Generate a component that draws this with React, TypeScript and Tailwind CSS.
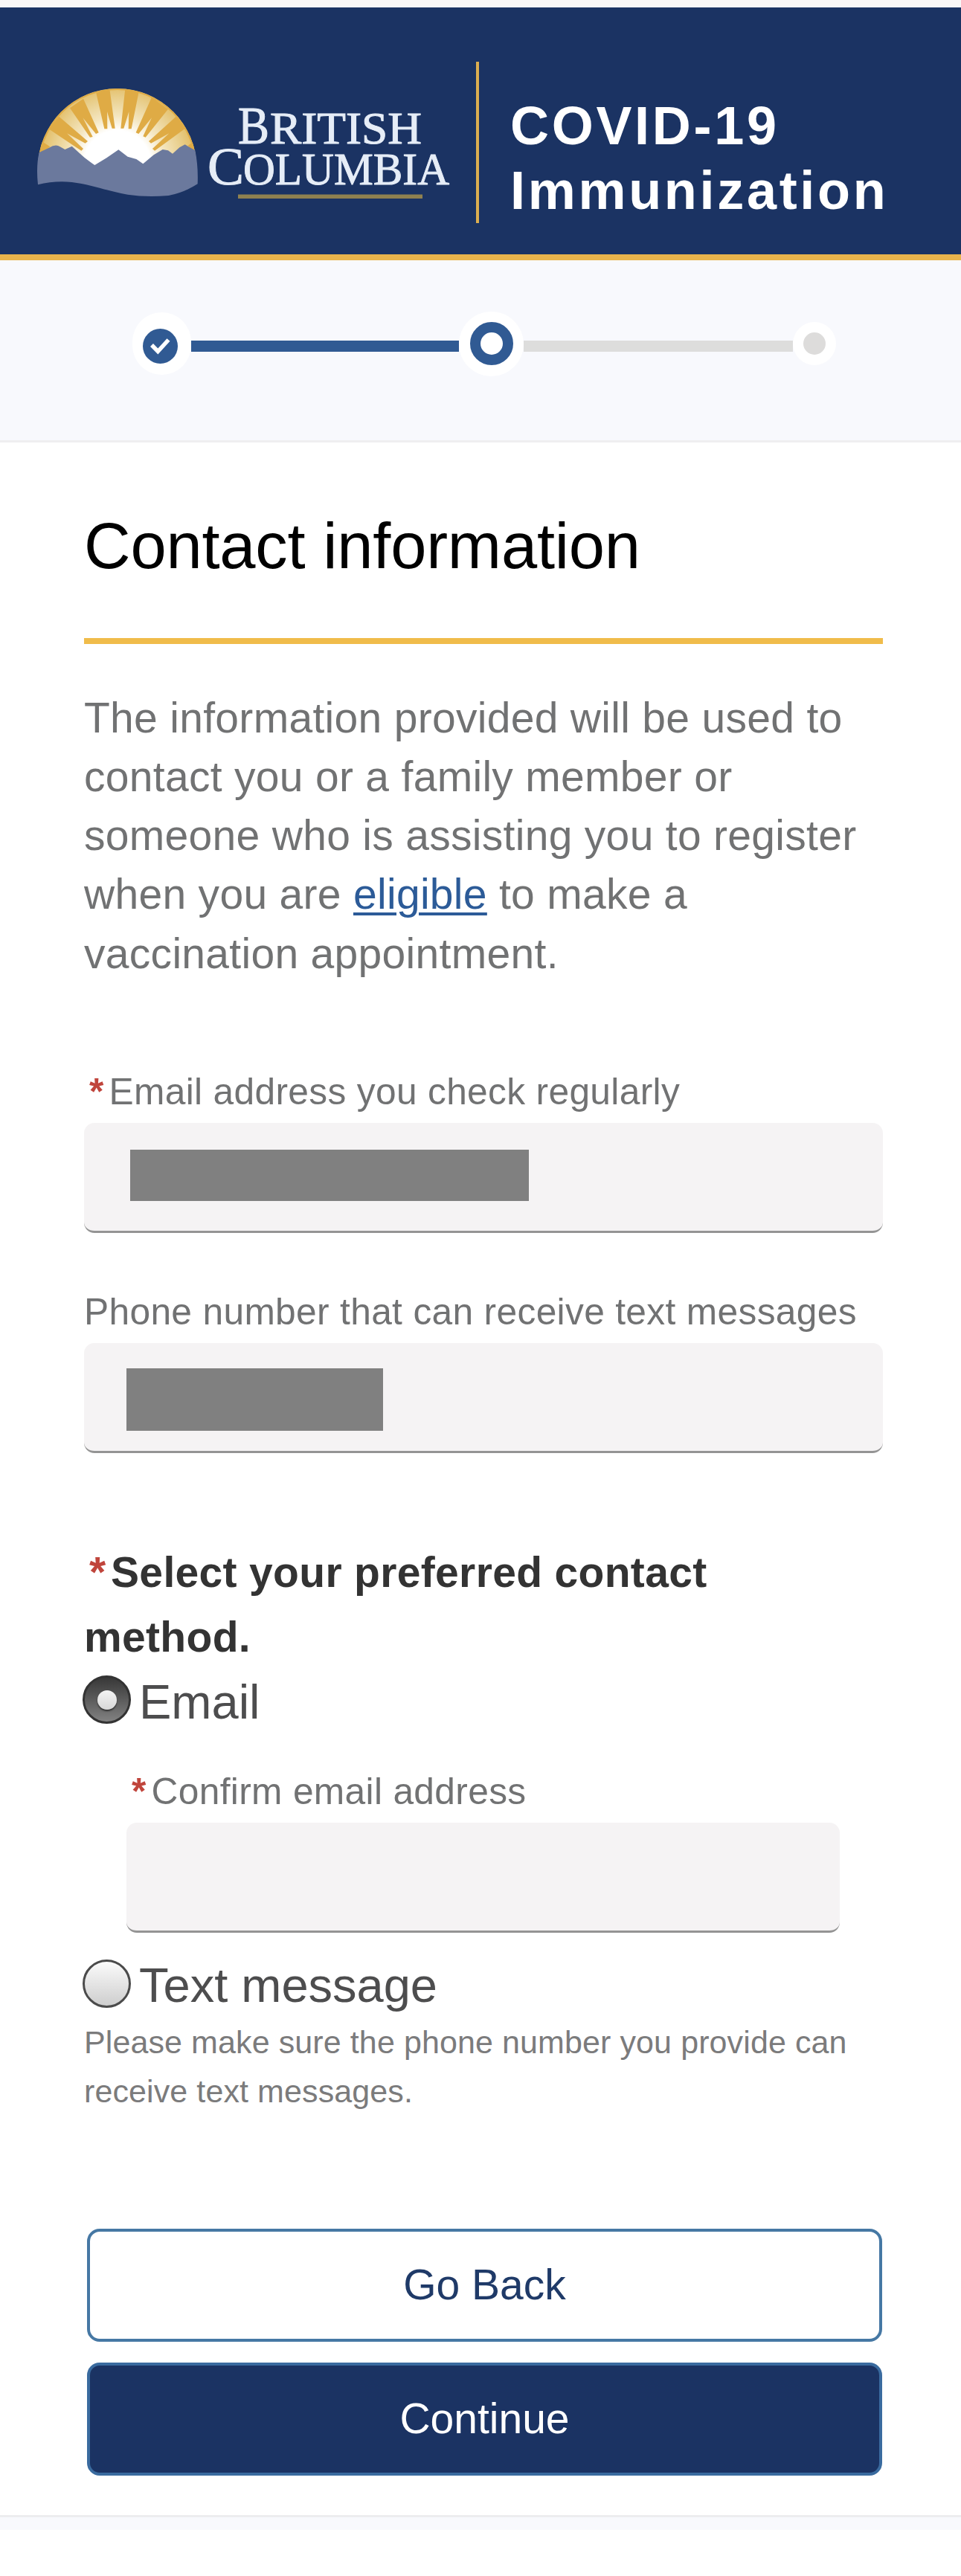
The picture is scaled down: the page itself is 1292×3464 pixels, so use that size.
import type { ReactNode } from "react";

const rays = [
  "415,88 470,100 440,250 428,250 430,180 409,248 397,248",
  "298,106 352,88 374,248 362,248 342,180 343,250 331,250",
  "522,122 588,170 497,284 487,280 522,205 469,270 458,265",
  "192,166 246,128 308,265 297,270 244,205 284,282 273,284",
  "620,200 660,246 534,338 525,330 592,268 519,308 510,300",
  "106,250 148,200 264,300 254,308 180,268 246,330 238,338",
];

function BrandLogo() {
  return (
    <svg
      className="mt-[100px] h-[166px] w-[562px] shrink-0 overflow-visible"
      viewBox="46 110 562 166"
      role="img"
      aria-label="British Columbia"
    >
      <defs>
        <radialGradient id="sun" gradientUnits="userSpaceOnUse" cx="383" cy="390" r="320">
          <stop offset="0.42" stopColor="#ffffff" />
          <stop offset="0.6" stopColor="#f4e6c0" />
          <stop offset="0.85" stopColor="#e8cd88" />
          <stop offset="1" stopColor="#e3bc62" />
        </radialGradient>
        <clipPath id="dome">
          <path d="M63 407 A320 320 0 0 1 703 407 Z" />
        </clipPath>
      </defs>
      <g transform="translate(30 90) scale(0.33333)">
        <g clipPath="url(#dome)">
          <rect x="55" y="80" width="660" height="330" fill="url(#sun)" />
          {rays.map((points) => (
            <polygon key={points} points={points} fill="#dfab45" />
          ))}
          <polygon points="60,350 78,300 112,322 80,350" fill="#dfab45" />
          <polygon points="706,350 690,300 668,318 690,345" fill="#dfab45" />
          <circle cx="383" cy="407" r="317" fill="none" stroke="#dfab45" strokeWidth="6" />
        </g>
        <path
          d="M68 345 L108 326 Q135 310 152 322 L172 333 L200 320 L250 365 Q280 388 292 396 L340 367 L388 334 L425 362 L460 372 L487 391 L530 355 L566 333 L588 337 L606 350 L634 325 L656 313 L697 337 Q710 400 707 472 Q650 508 590 519 Q500 527 425 515 C340 500 280 475 200 465 Q130 458 63 475 Q55 400 68 345Z"
          fill="#6b799d"
        />
      </g>
      <g className="font-['Liberation_Serif',serif]" fill="#e6edf7" stroke="#e6edf7" strokeWidth="1">
        <text x="320" y="193" fontSize="71" textLength="42" lengthAdjust="spacingAndGlyphs">
          B
        </text>
        <text x="363" y="193" fontSize="62" textLength="204" lengthAdjust="spacingAndGlyphs">
          RITISH
        </text>
        <text x="279" y="248" fontSize="72" textLength="49" lengthAdjust="spacingAndGlyphs">
          C
        </text>
        <text x="327" y="248" fontSize="62" textLength="277" lengthAdjust="spacingAndGlyphs">
          OLUMBIA
        </text>
      </g>
      <rect x="320" y="261.5" width="248" height="5.5" fill="#8f8150" />
    </svg>
  );
}

function Header() {
  return (
    <header className="flex h-[340px] items-start border-b-8 border-[#e9b44c] bg-[#1b3363] pl-[46px]">
      <BrandLogo />
      <div className="ml-8 mt-[73px] h-[217px] w-1 shrink-0 bg-[#dcae50]" />
      <h1 className="ml-[42px] mt-[116px] text-[72px] font-bold leading-[87px] tracking-[3.7px] text-white">
        COVID-19
        <br />
        Immunization
      </h1>
    </header>
  );
}

function Stepper() {
  return (
    <nav className="h-[245px] border-b-[3px] border-[#efeef0] bg-[#f8f9fd] pl-[178px] pt-[69px]">
      <div className="flex h-[86px] w-[946px] items-center">
        <span className="flex h-[84px] w-[79px] items-center justify-center rounded-full bg-white">
          <svg className="mr-1 mt-[7px] size-[47px]" viewBox="0 0 47 47">
            <circle cx="23.5" cy="23.5" r="23.5" fill="#305a93" />
            <path d="M12 22 L20.3 30.5 L34.5 15" fill="none" stroke="#ffffff" strokeWidth="5.5" />
          </svg>
        </span>
        <span className="mt-[7px] h-[14.5px] w-[360px] bg-[#305a93]" />
        <span className="flex size-[87px] shrink-0 items-center justify-center rounded-full bg-white">
          <span className="size-[58px] rounded-full border-[14.5px] border-[#305a93] bg-white" />
        </span>
        <span className="mt-[7px] h-[14.5px] flex-1 bg-[#dddddc]" />
        <span className="flex size-[58px] items-center justify-center rounded-full bg-white">
          <span className="size-[30px] rounded-full bg-[#dddcdb]" />
        </span>
      </div>
    </nav>
  );
}

function Label({ children, required = false }: { children: ReactNode; required?: boolean }) {
  return (
    <label className="flex h-[60px] whitespace-nowrap text-[49.7px] leading-[60px] tracking-[0.33px] text-[#717273]">
      {required ? <span className="ml-[7px] w-[26.5px] font-bold text-[#c0453c]">*</span> : null}
      {children}
    </label>
  );
}

function Field({ children, className = "" }: { children?: ReactNode; className?: string }) {
  return (
    <div
      className={`h-[148px] rounded-[14px] border-b-[3px] border-[#949494] bg-[#f5f3f4] ${className}`}
    >
      {children}
    </div>
  );
}

function RadioRow({ label, checked = false }: { label: string; checked?: boolean }) {
  return (
    <div className="-ml-0.5 flex h-[75px] items-start">
      {checked ? (
        <span className="mt-0.5 flex size-[65px] items-center justify-center rounded-full border-[3px] border-[#333333] bg-linear-to-b from-[#383838] to-[#828282]">
          <span className="size-[26px] rounded-full bg-linear-to-b from-[#f4f4f4] to-[#d8d8d8] shadow-[0_2px_2px_#333333]" />
        </span>
      ) : (
        <span className="mt-[3px] size-[65px] rounded-full border-[3px] border-[#4b4b4b] bg-linear-to-b from-[#fbfbfb] to-[#cecece]" />
      )}
      <span className="ml-[11px] text-[65px] leading-[75px] text-[#4d4d4e]">{label}</span>
    </div>
  );
}

export default function App() {
  return (
    <div className="min-h-[3464px] w-[1292px] bg-white font-['Liberation_Sans',Arial,sans-serif]">
      <div className="h-[10px] bg-[#f9f7f7]" />
      <Header />
      <Stepper />
      <main className="h-[2787px] px-[113px] pr-[105px] pt-[89px]">
        <h2 className="h-[100px] text-[86.7px] leading-[100px] tracking-[-0.2px] text-black">
          Contact information
        </h2>
        <div className="mt-[74px] h-2 bg-[#f0bc4b]" />
        <p className="mt-[59.5px] whitespace-nowrap text-[57px] leading-[79.33px] tracking-[0.3px] text-[#717273]">
          The information provided will be used to
          <br />
          contact you or a family member or
          <br />
          someone who is assisting you to register
          <br />
          when you are{" "}
          <a className="text-[#2c5b98] underline decoration-4 underline-offset-[5px]" href="#">
            eligible
          </a>{" "}
          to make a
          <br />
          vaccination appointment.
        </p>

        <div className="mt-[116px]">
          <Label required>Email address you check regularly</Label>
          <Field className="mt-3 pl-[62px] pt-9">
            <div className="h-[69px] w-[536px] bg-[#808080]" />
          </Field>
        </div>
        <div className="mt-[76px]">
          <Label>Phone number that can receive text messages</Label>
          <Field className="mt-3 pl-[57px] pt-[34px]">
            <div className="h-[84px] w-[345px] bg-[#808080]" />
          </Field>
        </div>

        <p className="mt-[117px] text-[57px] font-bold leading-[86.5px] tracking-[0.33px] text-[#333333]">
          <span className="ml-[7px] inline-block w-[29px] text-[#c0453c]">*</span>
          Select your preferred contact
          <br />
          method.
        </p>
        <div className="mt-[7px]">
          <RadioRow label="Email" checked />
          <div className="ml-[57px] mr-[58px] mt-[53px]">
            <Label required>Confirm email address</Label>
            <Field className="mt-3" />
          </div>
        </div>
        <div className="mt-[33px]">
          <RadioRow label="Text message" />
          <p className="mt-[7px] whitespace-nowrap text-[43px] leading-[65.4px] tracking-[0.1px] text-[#7b7b7c]">
            Please make sure the phone number you provide can
            <br />
            receive text messages.
          </p>
        </div>

        <div className="ml-1 mt-[152px] flex flex-col gap-7">
          <button className="h-[152px] w-[1069px] rounded-[17px] border-4 border-[#4678a4] bg-white text-[57px] text-[#1f3a68]">
            Go Back
          </button>
          <button className="h-[152px] w-[1069px] rounded-[17px] border-4 border-[#3a6b9f] bg-[#1b3363] text-[57px] text-white">
            Continue
          </button>
        </div>
      </main>
      <footer className="h-5 border-t-[3px] border-[#ededef] bg-[#f8f9fd]" />
    </div>
  );
}
